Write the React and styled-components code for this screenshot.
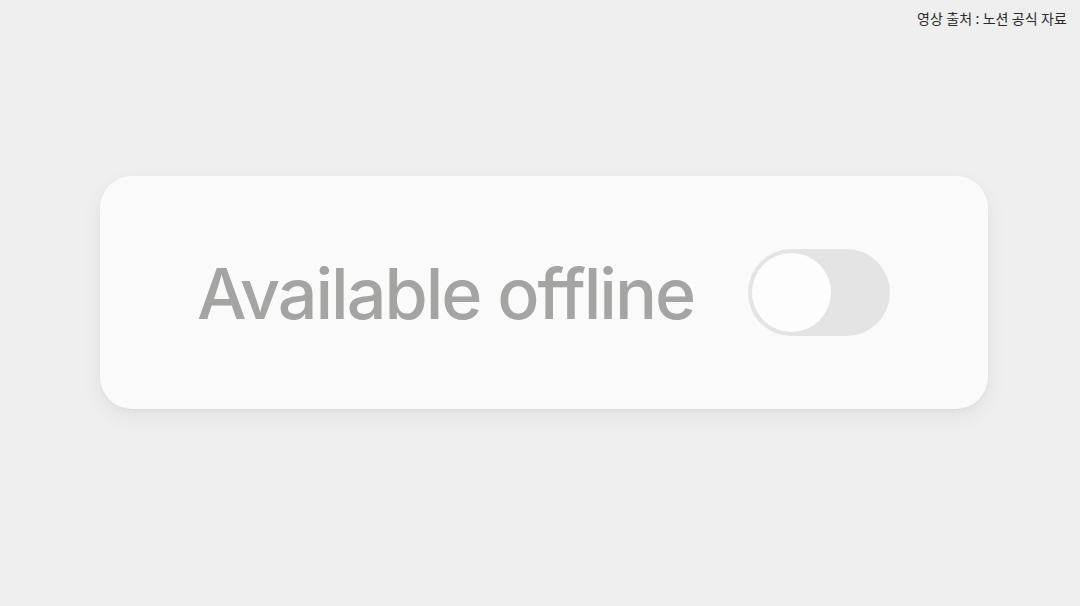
import React from "react";
import styled, { createGlobalStyle } from "styled-components";

const Global = createGlobalStyle`
  html, body { margin: 0; padding: 0; background: #efefef; }
  body { font-family: Inter, "Noto Sans", sans-serif; }
`;

const Page = styled.div`
  width: 1080px;
  height: 606px;
  background: #efefef;
  display: flex;
  flex-direction: column;
  overflow: hidden;
`;

const Caption = styled.div`
  align-self: flex-end;
  padding: 9px 13px 0 0;
  font-family: "Noto Sans CJK KR", "Noto Sans", sans-serif;
  font-size: 14px;
  line-height: 19px;
  color: #2a2a2a;
  letter-spacing: 0.1px;
`;

const Card = styled.div`
  margin: 148px 0 0 100px;
  width: 888px;
  height: 233px;
  box-sizing: border-box;
  background: #fafafa;
  border-radius: 32px;
  box-shadow: 0 8px 22px rgba(0, 0, 0, 0.06), 0 2px 4px rgba(0, 0, 0, 0.03);
  display: flex;
  align-items: center;
  justify-content: space-between;
  padding: 0 98px 0 97px;
`;

const Label = styled.span`
  font-family: Inter, sans-serif;
  font-size: 70px;
  font-weight: 500;
  letter-spacing: -2px;
  color: #a4a4a2;
  line-height: 1;
  margin-top: 2px;
`;

const Track = styled.div`
  width: 142px;
  height: 87px;
  border-radius: 44px;
  background: #e3e4e3;
  display: flex;
  align-items: center;
  padding: 0 4px;
  box-sizing: border-box;
  justify-content: ${(p) => (p.$on ? "flex-end" : "flex-start")};
`;

const Knob = styled.div`
  width: 79px;
  height: 79px;
  border-radius: 50%;
  background: #fdfdfd;
  box-sizing: border-box;
`;

export default function App() {
  return (
    <>
      <Global />
      <Page>
        <Caption>영상 출처 : 노션 공식 자료</Caption>
        <Card>
          <Label>Available offline</Label>
          <Track $on={false}>
            <Knob />
          </Track>
        </Card>
      </Page>
    </>
  );
}
